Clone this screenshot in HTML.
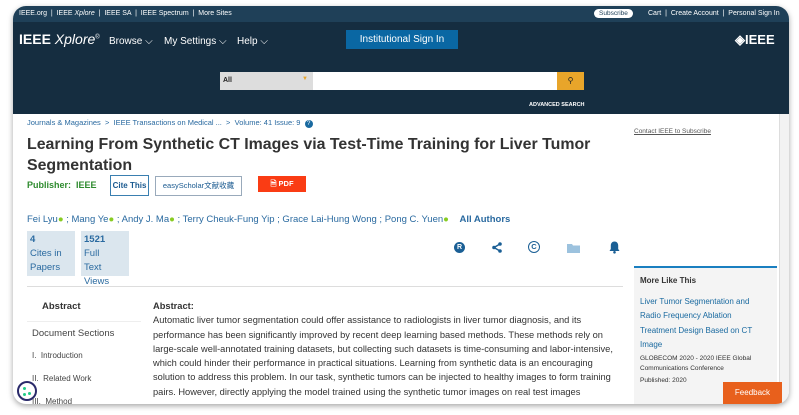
<!DOCTYPE html>
<html><head><meta charset="utf-8"><style>
*{margin:0;padding:0;box-sizing:border-box}
body{width:799px;height:415px;background:#fff;position:relative;overflow:hidden;font-family:"Liberation Sans","Noto Sans CJK SC",sans-serif}
#card{position:absolute;left:13px;top:6px;width:776px;height:398px;border-radius:13px;overflow:hidden;background:#fff;box-shadow:0 2px 6px rgba(0,0,0,.35)}
.a{position:absolute;white-space:nowrap}
#top{position:absolute;left:0;top:0;width:776px;height:16px;background:#1f4058;color:#fff;font-size:7px}
#hdr{position:absolute;left:0;top:16px;width:776px;height:92px;background:#152d40}
.lk{color:#2a6aa0}
.ab{font-size:9.3px;color:#333;line-height:14.3px}
</style></head><body>
<div id="card">
<div id="top">
<span class="a" style="left:6px;top:4px">IEEE.org &nbsp;|&nbsp; IEEE <i>Xplore</i> &nbsp;|&nbsp; IEEE SA &nbsp;|&nbsp; IEEE Spectrum &nbsp;|&nbsp; More Sites</span>
<span class="a" style="left:581px;top:3px;background:#fff;color:#1f4058;border-radius:6px;padding:1px 5px;font-size:6.5px">Subscribe</span>
<span class="a" style="left:635px;top:4px">Cart &nbsp;|&nbsp; Create Account &nbsp;|&nbsp; Personal Sign In</span>
</div>
<div id="hdr">
<span class="a" style="left:6px;top:9px;color:#fff;font-size:14px"><b>IEEE</b> <i>Xplore</i><sup style="font-size:6px">®</sup></span>
<span class="a" style="left:96px;top:14px;color:#fff;font-size:10px">Browse ⌵</span>
<span class="a" style="left:151px;top:14px;color:#fff;font-size:10px">My Settings ⌵</span>
<span class="a" style="left:224px;top:14px;color:#fff;font-size:10px">Help ⌵</span>
<div class="a" style="left:333px;top:8px;width:112px;height:19px;background:#0a67a3;color:#fff;font-size:10px;text-align:center;line-height:19px">Institutional Sign In</div>
<span class="a" style="left:722px;top:10px;color:#fff;font-size:13px;font-weight:bold">◈IEEE</span>
<div class="a" style="left:207px;top:50px;width:93px;height:18px;background:#ddd;font-size:7px;font-weight:bold;padding:5px 3px;color:#222">All<span style="position:absolute;left:82px;top:4px;color:#e8a52a;font-size:6px">▼</span></div>
<div class="a" style="left:300px;top:50px;width:244px;height:18px;background:#fff"></div>
<div class="a" style="left:544px;top:50px;width:27px;height:18px;background:#e8a52a;color:#222;font-size:8px;text-align:center;line-height:18px">⚲</div>
<span class="a" style="left:516px;top:80px;color:#fff;font-size:5.5px;font-weight:bold">ADVANCED SEARCH</span>
</div>
<div class="a" style="left:766px;top:108px;width:10px;height:290px;background:#f2f2f2;border-left:1px solid #ddd"></div>
<span class="a lk" style="left:14px;top:112px;font-size:7.5px">Journals &amp; Magazines &nbsp;&gt;&nbsp; IEEE Transactions on Medical ... &nbsp;&gt;&nbsp; Volume: 41 Issue: 9 &nbsp;<span style="display:inline-block;width:8px;height:8px;border-radius:50%;background:#1a6aa0;color:#fff;font-size:6px;text-align:center;line-height:8px">?</span></span>
<div class="a" style="left:14px;top:128px;font-size:15.9px;font-weight:bold;color:#333;line-height:21px;white-space:normal;width:600px">Learning From Synthetic CT Images via Test-Time Training for Liver Tumor Segmentation</div>
<span class="a" style="left:14px;top:174px;font-size:9px;font-weight:bold;color:#2e8b2e">Publisher: &nbsp;IEEE</span>
<div class="a" style="left:97px;top:169px;width:39px;height:21px;border:1px solid #3a7fb0;font-size:8px;font-weight:bold;color:#1a5a90;text-align:center;line-height:19px">Cite This</div>
<div class="a" style="left:142px;top:170px;width:87px;height:20px;border:1px solid #9ab;font-size:7.5px;color:#1a5a90;text-align:center;line-height:18px">easyScholar文献收藏</div>
<div class="a" style="left:245px;top:170px;width:48px;height:16px;background:#fa3c14;color:#fff;font-size:7.5px;font-weight:bold;text-align:center;line-height:16px">🗎 PDF</div>
<span class="a lk" style="left:14px;top:208px;font-size:9.5px">Fei Lyu<span style="color:#8c2">●</span> ; Mang Ye<span style="color:#8c2">●</span> ; Andy J. Ma<span style="color:#8c2">●</span> ; Terry Cheuk-Fung Yip ; Grace Lai-Hung Wong ; Pong C. Yuen<span style="color:#8c2">●</span> &nbsp;&nbsp;&nbsp;<b>All Authors</b></span>
<div class="a" style="left:14px;top:225px;width:48px;height:45px;background:#dbe6ee"></div>
<div class="a" style="left:68px;top:225px;width:48px;height:45px;background:#dbe6ee"></div>
<div class="a lk" style="left:17px;top:227px;font-size:9.5px;line-height:14px"><b>4</b><br>Cites in<br>Papers</div>
<div class="a lk" style="left:71px;top:227px;font-size:9.5px;line-height:14px"><b>1521</b><br>Full<br>Text<br>Views</div>
<div class="a" style="left:441px;top:236px;width:11px;height:11px;border-radius:50%;background:#1a5f95;color:#fff;font-size:7px;font-weight:bold;text-align:center;line-height:11px">R</div>
<svg class="a" style="left:479px;top:236px" width="10" height="11" viewBox="0 0 10 11"><path d="M8 2L2 5.5L8 9" stroke="#1a5f95" stroke-width="1.5" fill="none"/><circle cx="8" cy="2" r="1.8" fill="#1a5f95"/><circle cx="2" cy="5.5" r="1.8" fill="#1a5f95"/><circle cx="8" cy="9" r="1.8" fill="#1a5f95"/></svg>
<div class="a" style="left:515px;top:235px;width:12px;height:12px;border-radius:50%;border:1.5px solid #1a5f95;color:#1a5f95;font-size:7.5px;font-weight:bold;text-align:center;line-height:9px">C</div>
<svg class="a" style="left:554px;top:237px" width="15" height="10" viewBox="0 0 15 10"><path d="M0 1h5l1 1.5h7v7.5H0z" fill="#9cc2de"/></svg>
<svg class="a" style="left:596px;top:235px" width="11" height="13" viewBox="0 0 11 13"><path d="M5.5 0.5c-2.2 0-3.7 1.7-3.7 4v3.5L0.5 10h10L9.2 8V4.5c0-2.3-1.5-4-3.7-4z" fill="#1a5f95"/><circle cx="5.5" cy="11.3" r="1.3" fill="#1a5f95"/></svg>
<div class="a" style="left:14px;top:280px;width:596px;height:1px;background:#ddd"></div>
<span class="a" style="left:29px;top:295px;font-size:9.5px;font-weight:bold;color:#333">Abstract</span>
<div class="a" style="left:14px;top:315px;width:114px;height:1px;background:#eee"></div>
<span class="a" style="left:19px;top:322px;font-size:9.5px;color:#444">Document Sections</span>
<span class="a" style="left:19px;top:345px;font-size:8px;color:#444">I. &nbsp;Introduction</span>
<span class="a" style="left:19px;top:368px;font-size:8px;color:#444">II. &nbsp;Related Work</span>
<span class="a" style="left:19px;top:391px;font-size:8px;color:#444">III. &nbsp;Method</span>
<div class="a" style="left:4px;top:375px;width:20px;height:20px;border:2px solid #2a2a6a;border-radius:50%;background:#fff"><span style="position:absolute;left:4px;top:4px;width:3px;height:3px;background:#2c8;border-radius:50%"></span><span style="position:absolute;left:9px;top:9px;width:3px;height:3px;background:#2c8;border-radius:50%"></span><span style="position:absolute;left:4px;top:10px;width:3px;height:3px;background:#2c8;border-radius:50%"></span></div>
<div class="a ab" style="left:140px;top:293px"><b>Abstract:</b><br>Automatic liver tumor segmentation could offer assistance to radiologists in liver tumor diagnosis, and its<br>performance has been significantly improved by recent deep learning based methods. These methods rely on<br>large-scale well-annotated training datasets, but collecting such datasets is time-consuming and labor-intensive,<br>which could hinder their performance in practical situations. Learning from synthetic data is an encouraging<br>solution to address this problem. In our task, synthetic tumors can be injected to healthy images to form training<br>pairs. However, directly applying the model trained using the synthetic tumor images on real test images</div>
<span class="a" style="left:621px;top:122px;font-size:6.5px;color:#555;text-decoration:underline">Contact IEEE to Subscribe</span>
<div class="a" style="left:621px;top:260px;width:143px;height:138px;background:#f4f4f4;border-top:2px solid #1a7fc0"></div>
<span class="a" style="left:627px;top:270px;font-size:8px;font-weight:bold;color:#333">More Like This</span>
<div class="a" style="left:627px;top:289px;font-size:8px;color:#1a6aa0;line-height:14.3px">Liver Tumor Segmentation and<br>Radio Frequency Ablation<br>Treatment Design Based on CT<br>Image</div>
<div class="a" style="left:627px;top:348px;font-size:6.5px;color:#333;line-height:10px">GLOBECOM 2020 - 2020 IEEE Global<br>Communications Conference<br><span style="line-height:14px">Published: 2020</span></div>
<div class="a" style="left:710px;top:376px;width:59px;height:22px;background:#e8601c;color:#fff;font-size:8px;text-align:center;line-height:22px">Feedback</div>
</div>
</body></html>
